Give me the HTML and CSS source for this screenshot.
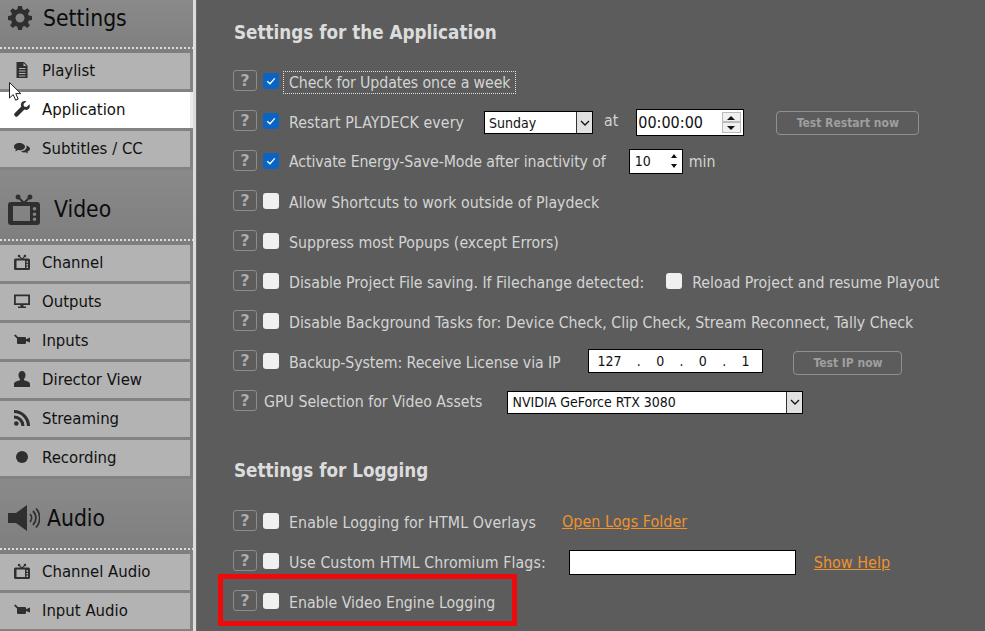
FILE: index.html
```html
<!DOCTYPE html>
<html lang="en">
<head>
<meta charset="utf-8">
<title>Playdeck Settings</title>
<link rel="stylesheet" href="styles.css">
</head>
<body>
<svg class="defs" width="0" height="0" aria-hidden="true">
  <symbol id="tv" viewBox="0 0 32 32"><path d="M10 1.500a2.500 2.500 0 0 1 2.400 3.400L16 8.400l3.600-3.500A2.500 2.500 0 1 1 21 6.300L18.500 9H29a3 3 0 0 1 3 3v17a3 3 0 0 1-3 3H3a3 3 0 0 1-3-3V12a3 3 0 0 1 3-3h10.500L11 6.300A2.500 2.500 0 1 1 10 1.500zM5 13v15h17V13zm21.500 1a1.800 1.800 0 1 0 0 3.600 1.800 1.800 0 0 0 0-3.600zm0 5.500a1.800 1.800 0 1 0 0 3.600 1.800 1.800 0 0 0 0-3.600zm0 5a1.800 1.800 0 1 0 0 3.600 1.800 1.800 0 0 0 0-3.600z" fill-rule="evenodd"/></symbol>
  <symbol id="cam" viewBox="0 0 16 12"><path d="M0 1.500 1.500.5 4 3h7a1 1 0 0 1 1 1v1.200L16 3.500v5L12 7v2a1 1 0 0 1-1 1H4a1 1 0 0 1-1-1V4.500z"/></symbol>
  <symbol id="check" viewBox="0 0 16 16"><path d="M4.200 8.200 7 10.800l4.800-5.400" fill="none" stroke="#fff" stroke-width="1.300"/></symbol>
</svg>

<div class="app">
  <nav class="sidebar">
    <div class="head head-first">
      <svg class="head-icon gear" viewBox="0 0 24 24"><path fill-rule="evenodd" d="M10 0h4l.6 3.200 2 .8L19.300 2.200l2.600 2.600L20 7.400l.8 2L24 10v4l-3.200.6-.8 2 1.900 2.700-2.600 2.600-2.700-1.900-2 .8L14 24h-4l-.6-3.200-2-.8-2.700 1.900-2.600-2.600L4 16.600l-.8-2L0 14v-4l3.200-.6.800-2L2.100 4.800l2.600-2.600L7.400 4l2-.8zM12 7.500a4.500 4.500 0 1 0 0 9 4.500 4.500 0 0 0 0-9z"/></svg>
      <span class="head-text">Settings</span>
    </div>
    <a class="item"><svg class="ico" viewBox="0 0 16 16"><path fill-rule="evenodd" d="M2.500 0H10l3.500 3.500V16h-11zM5 6v1h6.500V6zm0 2.500v1h6.500v-1zM5 11v1h6.500v-1zm0 2.500v1h6.500v-1zM9.500 1v3H12.500z"/></svg>Playlist</a>
    <a class="item active"><svg class="ico" viewBox="0 0 16 16"><path d="M15.500 3.200 12.600 6 10 5.400 9.500 3l2.800-2.800C10.200-.4 8 .4 7.200 2.200c-.5 1.200-.4 2.400.1 3.400L.7 12.200a1.800 1.800 0 0 0 0 2.500l.5.500a1.800 1.800 0 0 0 2.500 0l6.700-6.600c1 .4 2.200.5 3.300 0 1.800-.9 2.500-3.200 1.800-5.400z"/></svg>Application</a>
    <a class="item"><svg class="ico" viewBox="0 0 16 16"><path d="M5.500 3C2.500 3 0 4.600 0 6.700c0 1.200.8 2.200 2 2.900l-.8 2 2.800-1.500c.5.100 1 .1 1.500.1 3 0 5.500-1.600 5.500-3.500S8.500 3 5.500 3z"/><path d="M12 5.500c.4.400.6 1 .6 1.600 0 2.300-2.500 4-5.600 4.300.9.700 2.100 1 3.400 1 .4 0 .8 0 1.200-.1l2.400 1.200-.6-1.800c1.600-.6 2.600-1.700 2.600-2.900 0-1.500-1.600-2.800-4-3.300z"/></svg>Subtitles / CC</a>

    <div class="head">
      <svg class="head-icon tv"><use href="#tv"/></svg>
      <span class="head-text head-video">Video</span>
    </div>
    <a class="item"><svg class="ico"><use href="#tv"/></svg>Channel</a>
    <a class="item"><svg class="ico" viewBox="0 0 16 16"><path fill-rule="evenodd" d="M0 1.500h16V12H9.500v1.500h2.500V15H4v-1.500h2.500V12H0zM1.800 3.200v7h12.400v-7z"/></svg>Outputs</a>
    <a class="item"><svg class="ico ico-cam"><use href="#cam"/></svg>Inputs</a>
    <a class="item"><svg class="ico" viewBox="0 0 16 16"><path d="M8 0c2.200 0 3.500 1.800 3.500 4 0 1.600-.6 3-1.500 3.900v1.300c2.500.7 6 1.500 6 3.800V16H0v-3c0-2.300 3.500-3.100 6-3.800V7.900C5.100 7 4.500 5.600 4.500 4c0-2.200 1.300-4 3.500-4z"/></svg>Director View</a>
    <a class="item"><svg class="ico" viewBox="0 0 16 16"><circle cx="2.300" cy="13.500" r="2.300"/><path d="M0 5.500v3.100A7.400 7.400 0 0 1 7.400 16h3.100A10.500 10.500 0 0 0 0 5.500zM0 0v3.100A12.900 12.900 0 0 1 12.900 16H16A16 16 0 0 0 0 0z"/></svg>Streaming</a>
    <a class="item"><svg class="ico ico-rec" viewBox="0 0 12 12"><circle cx="6" cy="6" r="6"/></svg>Recording</a>

    <div class="head">
      <svg class="head-icon speaker" viewBox="0 0 32 26"><path d="M0 8h8l11-8v26L8 18H0z"/><path d="M22 9a6 6 0 0 1 0 8M25 6a10 10 0 0 1 0 14M28 3.500a14 14 0 0 1 0 19" fill="none" stroke="#2f2f2f" stroke-width="1.800"/></svg>
      <span class="head-text head-audio">Audio</span>
    </div>
    <a class="item"><svg class="ico"><use href="#tv"/></svg>Channel Audio</a>
    <a class="item"><svg class="ico ico-cam"><use href="#cam"/></svg>Input Audio</a>
  </nav>
  <div class="rule"></div>

  <main class="main">
    <h2 class="title title-app">Settings for the Application</h2>

    <div class="row">
      <button class="help">?</button>
      <span class="cb on"><svg><use href="#check"/></svg></span>
      <span class="lbl focus tight">Check for Updates once a week</span>
    </div>
    <div class="row">
      <button class="help">?</button>
      <span class="cb on"><svg><use href="#check"/></svg></span>
      <span class="lbl loose">Restart PLAYDECK every</span>
      <span class="select sel-day">Sunday<i class="arrow"><svg viewBox="0 0 10 6"><path d="M1 1l4 4 4-4" fill="none" stroke="#111" stroke-width="1.300"/></svg></i></span>
      <span class="lbl at">at</span>
      <span class="input time">00:00:00<i class="spin boxed"><b class="up"></b><b class="down"></b></i></span>
      <button class="btn btn-restart">Test Restart now</button>
    </div>
    <div class="row row-up">
      <button class="help">?</button>
      <span class="cb on"><svg><use href="#check"/></svg></span>
      <span class="lbl tight">Activate Energy-Save-Mode after inactivity of</span>
      <span class="input num">10<i class="spin"><b class="up"></b><b class="down"></b></i></span>
      <span class="lbl min">min</span>
    </div>
    <div class="row">
      <button class="help">?</button>
      <span class="cb"></span>
      <span class="lbl">Allow Shortcuts to work outside of Playdeck</span>
    </div>
    <div class="row">
      <button class="help">?</button>
      <span class="cb"></span>
      <span class="lbl">Suppress most Popups (except Errors)</span>
    </div>
    <div class="row">
      <button class="help">?</button>
      <span class="cb"></span>
      <span class="lbl">Disable Project File saving. If Filechange detected:</span>
      <span class="cb cb-reload"></span>
      <span class="lbl">Reload Project and resume Playout</span>
    </div>
    <div class="row">
      <button class="help">?</button>
      <span class="cb"></span>
      <span class="lbl">Disable Background Tasks for: Device Check, Clip Check, Stream Reconnect, Tally Check</span>
    </div>
    <div class="row">
      <button class="help">?</button>
      <span class="cb"></span>
      <span class="lbl tight">Backup-System: Receive License via IP</span>
      <span class="input ip"><span>127</span><span>.</span><span>0</span><span>.</span><span>0</span><span>.</span><span>1</span></span>
      <button class="btn btn-ip">Test IP now</button>
    </div>
    <div class="row">
      <button class="help">?</button>
      <span class="lbl lbl-gpu">GPU Selection for Video Assets</span>
      <span class="select sel-gpu">NVIDIA GeForce RTX 3080<i class="arrow"><svg viewBox="0 0 10 6"><path d="M1 1l4 4 4-4" fill="none" stroke="#111" stroke-width="1.300"/></svg></i></span>
    </div>

    <h2 class="title title-log">Settings for Logging</h2>

    <div class="row">
      <button class="help">?</button>
      <span class="cb"></span>
      <span class="lbl loose">Enable Logging for HTML Overlays</span>
      <a class="link link-logs">Open Logs Folder</a>
    </div>
    <div class="row">
      <button class="help">?</button>
      <span class="cb"></span>
      <span class="lbl loose">Use Custom HTML Chromium Flags:</span>
      <span class="input flags"></span>
      <a class="link link-help">Show Help</a>
    </div>
    <div class="row">
      <button class="help">?</button>
      <span class="cb"></span>
      <span class="lbl">Enable Video Engine Logging</span>
    </div>
  </main>
</div>

<div class="highlight"></div>
<svg class="cursor" viewBox="0 0 12 19"><path d="M.5.5v15.500l3.700-3.400 2.400 5.600 2.600-1.100-2.400-5.500h5z" fill="#fff" stroke="#222" stroke-width="1"/></svg>
</body>
</html>
```

FILE: styles.css
```css
* { box-sizing: border-box; }
html, body { margin: 0; padding: 0; }
body {
  width: 985px;
  height: 631px;
  overflow: hidden;
  position: relative;
  background: #5c5c5c;
  font-family: "DejaVu Sans", sans-serif;
  font-stretch: condensed;
  font-size: 15.75px;
}
.defs { position: absolute; }
.app { display: flex; height: 631px; overflow: hidden; }

/* Sidebar */
.sidebar {
  width: 193px;
  flex: none;
  background: #828282;
  padding-right: 3px;
  display: flex;
  flex-direction: column;
}
.rule {
  width: 4px;
  flex: none;
  background: linear-gradient(to right, #dcdcdc 0 3px, #6a6a6a 3px);
}
.head {
  height: 75px;
  flex: none;
  margin-right: -3px;
  display: flex;
  align-items: center;
  padding: 2px 0 0 8px;
  background-image:
    repeating-linear-gradient(to right, #dcdcdc 0 2px, transparent 2px 4px),
    linear-gradient(#8a8a8a, #7e7e7e);
  background-size: 100% 2px, 100% 100%;
  background-position: 0 69px, 0 0;
  background-repeat: no-repeat;
  color: #0c0c0c;
}
.head-first {
  height: 53px;
  padding-top: 0;
  padding-bottom: 18px;
  background-position: 0 47px, 0 0;
}
.head-text { font-size: 22.7px; line-height: 28px; }
.head-first .head-text { margin-left: 11px; }
.head-video { margin-left: 14px; }
.head-audio { margin-left: 7px; }
.head-icon { fill: #2f2f2f; flex: none; }
.gear { width: 24px; height: 24px; }
.tv { width: 32px; height: 32px; }
.speaker { width: 32px; height: 26px; }

.item {
  height: 36px;
  flex: none;
  margin-bottom: 3px;
  display: flex;
  align-items: center;
  background: #b3b3b3;
  color: #111;
  font-size: 16.6px;
  padding: 0 0 2px 14px;
}
.item.active { background: #fff; margin-right: -3px; border-right: 3px solid #ececec; }
.ico { width: 16px; height: 16px; fill: #2f2f2f; margin-right: 12px; flex: none; }
.ico-cam { height: 12px; }
.ico-rec { width: 12px; height: 12px; margin-left: 2px; margin-right: 14px; }

/* Main */
.main { flex: 1; padding-left: 36px; color: #d8d8d8; }
.title {
  margin: 0 0 0 1px;
  font-size: 18.7px;
  font-weight: bold;
  color: #dcdcdc;
  line-height: 24px;
}
.title-app { padding-top: 21px; height: 62px; }
.title-log { padding-top: 37px; height: 80px; }
.row { height: 40px; display: flex; align-items: center; white-space: nowrap; }
.help {
  width: 24px;
  height: 21px;
  padding: 0;
  flex: none;
  border: 1px solid #8c8c8c;
  border-radius: 3px;
  background: transparent;
  color: #acacac;
  font: bold 16px/17px "DejaVu Sans", sans-serif;
  margin-top: -3px;
}
.cb {
  width: 16px;
  height: 16px;
  flex: none;
  margin-left: 6px;
  margin-top: -2px;
  border-radius: 3px;
  background: #f0f0f0;
}
.cb.on { background: #0a64c4; }
.cb svg { width: 16px; height: 16px; display: block; }
.lbl { margin-left: 10px; color: #d4d4d4; }
.tight { letter-spacing: -.1px; }
.loose { letter-spacing: .1px; }
.lbl-gpu { margin-left: 7px; margin-top: -2px; }
.focus { margin-left: 5px; padding: 1px 5px; outline: 1px dotted #e0e0e0; }
.at { margin-left: 11px; margin-top: -3px; }
.min { margin-left: 6px; }
.cb-reload { margin-left: 22px; }
.row-up .lbl, .row-up .input { margin-top: -2px; }

.select, .input {
  display: inline-flex;
  align-items: center;
  flex: none;
  background: #fff;
  border: 1px solid #000;
  color: #111;
  position: relative;
  font-size: 14px;
}
.select { height: 23px; padding-left: 4px; }
.arrow {
  position: absolute;
  right: 0;
  top: 0;
  bottom: 0;
  width: 16px;
  background: #e1e1e1;
  border-left: 1px solid #333;
  display: flex;
  align-items: center;
  justify-content: center;
}
.arrow svg { width: 10px; height: 6px; }
.sel-day { width: 109px; margin-left: 20px; margin-top: 1px; }
.sel-gpu { width: 296px; margin-left: 25px; }
.time { width: 108px; height: 27px; margin-left: 18px; padding-left: 1px; font-size: 16px; }
.num { width: 54px; height: 25px; margin-left: 23px; padding-left: 5px; }
.spin {
  position: absolute;
  right: 2px;
  top: 2px;
  bottom: 2px;
  width: 12px;
  display: flex;
  flex-direction: column;
  justify-content: space-around;
  align-items: center;
}
.spin.boxed { background: #f0f0f0; width: 19px; }
.spin.boxed b { flex: 1; width: 100%; border: 1px solid #bbb; display: block; position: relative; }
.up, .down { display: block; }
.spin:not(.boxed) .up { width: 0; height: 0; border: 3px solid transparent; border-top: 0; border-bottom: 4px solid #111; }
.spin:not(.boxed) .down { width: 0; height: 0; border: 3px solid transparent; border-bottom: 0; border-top: 4px solid #111; }
.spin.boxed .up::after, .spin.boxed .down::after {
  content: "";
  position: absolute;
  left: 4px;
  top: 3px;
  border: 4px solid transparent;
}
.spin.boxed .up::after { border-top: 0; border-bottom: 4px solid #111; }
.spin.boxed .down::after { border-bottom: 0; border-top: 4px solid #111; }

.ip {
  width: 175px;
  height: 24px;
  margin-left: 28px;
  margin-top: -2px;
  padding: 0 13px 0 8px;
  justify-content: space-between;
}
.flags { width: 227px; height: 25px; margin-left: 23px; }

.btn {
  height: 24px;
  flex: none;
  padding: 0;
  border: 1px solid #909090;
  border-radius: 4px;
  background: transparent;
  color: #9f9f9f;
  font: bold 12px "DejaVu Sans", sans-serif;
  font-stretch: condensed;
  margin-top: 1px;
}
.btn-restart { width: 143px; margin-left: 32px; }
.btn-ip { width: 109px; margin-left: 30px; }

.link { color: #f0922e; text-decoration: underline; font-size: 16px; }
.link-logs { margin-left: 26px; margin-top: -2px; }
.link-help { margin-left: 18px; }

/* Overlays */
.highlight {
  position: absolute;
  left: 218px;
  top: 574px;
  width: 299px;
  height: 52px;
  border: 5px solid #ee0a0a;
}
.cursor { position: absolute; left: 9px; top: 82px; width: 12px; height: 19px; }
```
